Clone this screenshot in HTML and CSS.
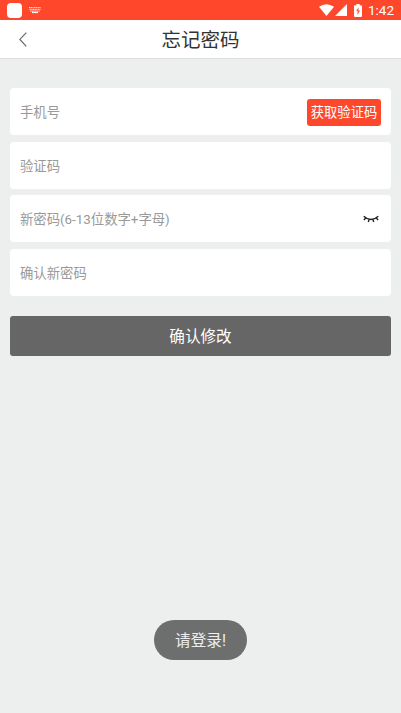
FILE: index.html
```html
<!DOCTYPE html>
<html lang="zh-CN">
<head>
<meta charset="utf-8">
<title>忘记密码</title>
<link rel="stylesheet" href="styles.css">
</head>
<body>
<div class="screen">
  <div class="status">
    <span class="app-dot"></span>
    <svg class="keyboard" width="12" height="8" viewBox="0 0 12 8"><path d="M0 1.500h12M.5 3.400h11M1 5.200h10" stroke="#fff" stroke-opacity=".75" stroke-width="1.200" stroke-dasharray="1.300 .4"/><path d="M3 6.500h6" stroke="#fff" stroke-width="1.200"/></svg>
    <span class="spacer"></span>
    <svg class="wifi" width="15" height="12" viewBox="0 0 15 12"><path d="M0 2.800Q7.500-2.400 15 2.800L7.500 12z" fill="#fff"/></svg>
    <svg class="signal" width="12" height="12" viewBox="0 0 12 12"><path d="M12 0v12H0z" fill="#fff"/></svg>
    <svg class="battery" width="8" height="13" viewBox="0 0 8 13"><path d="M2.400 0h3.200v1.300H7q1 0 1 1V12q0 1-1 1H1q-1 0-1-1V2.300q0-1 1-1h1.400z" fill="#fff"/><path d="M4.700 3.200L2.200 7h1.500L3.300 11 6 6.500H4.300z" fill="#ff482b"/></svg>
    <span class="time">1:42</span>
  </div>
  <header class="header">
    <svg class="back" width="8" height="15" viewBox="0 0 8 15"><path d="M7.300.700L.9 7.400l6.400 6.900" fill="none" stroke="#666" stroke-width="1.200"/></svg>
    <h1 class="title">忘记密码</h1>
  </header>
  <main class="form">
    <div class="field"><span class="hint">手机号</span><button class="code">获取验证码</button></div>
    <div class="field"><span class="hint">验证码</span></div>
    <div class="field"><span class="hint">新密码(6-13位数字+字母)</span>
      <svg class="eye" width="16" height="9" viewBox="0 0 16 9"><path d="M.7 1.200Q8 8 15.300 1.200M2.700 3L.9 4.900M6 4.600L5.300 7M10 4.600l.7 2.400M13.300 3l1.800 1.900" fill="none" stroke="#222" stroke-width="1.400"/></svg>
    </div>
    <div class="field"><span class="hint">确认新密码</span></div>
    <button class="submit">确认修改</button>
  </main>
  <div class="toast">请登录!</div>
</div>
</body>
</html>
```
FILE: styles.css
```css
* { box-sizing: border-box; }
body { margin: 0; font-family: Roboto, "Noto Sans CJK SC", sans-serif; }
button { border: 0; padding: 0; font-family: inherit; color: #fff; }
svg { display: block; flex: none; }
.screen { position: relative; width: 401px; height: 713px; background: #edefee; overflow: hidden; }
.status { display: flex; align-items: center; height: 20px; padding: 0 7px; background: #ff482b; }
.app-dot { width: 15px; height: 15px; border-radius: 4px; background: #fff; }
.keyboard { margin-left: 7px; }
.spacer { flex: 1; }
.signal { margin-left: 1px; }
.battery { margin-left: 7px; }
.time { margin-left: 6px; font-size: 13.5px; line-height: 20px; color: #fff; }
.header { display: grid; grid-template-columns: 40px 1fr 40px; align-items: center; height: 39px; background: #fff; border-bottom: 1px solid #dcdedd; }
.back { margin-left: 19px; }
.title { margin: 0; padding-top: 4px; font-size: 19.5px; font-weight: 400; line-height: 34px; color: #333; text-align: center; }
.form { display: flex; flex-direction: column; gap: 6.5px; padding: 29.4px 10px 0; }
.field { display: flex; align-items: center; justify-content: space-between; height: 47px; padding: 0 10px; border-radius: 4px; background: #fff; }
.hint { font-size: 13.35px; color: #999; }
.code { width: 74px; height: 27px; margin-top: 1px; border-radius: 3px; background: #ff482b; font-size: 13.3px; line-height: 27px; white-space: nowrap; }
.eye { margin: 2px 2px 0 0; }
.submit { height: 40px; margin-top: 14px; padding-top: 2px; border-radius: 3px; background: #666; font-size: 15.6px; line-height: 38px; }
.toast { position: absolute; left: 154px; top: 620px; width: 93px; height: 40px; padding-top: 2px; border-radius: 20px; background: #6d6f6e; color: #eee; font-size: 15.6px; line-height: 38px; text-align: center; }
```
